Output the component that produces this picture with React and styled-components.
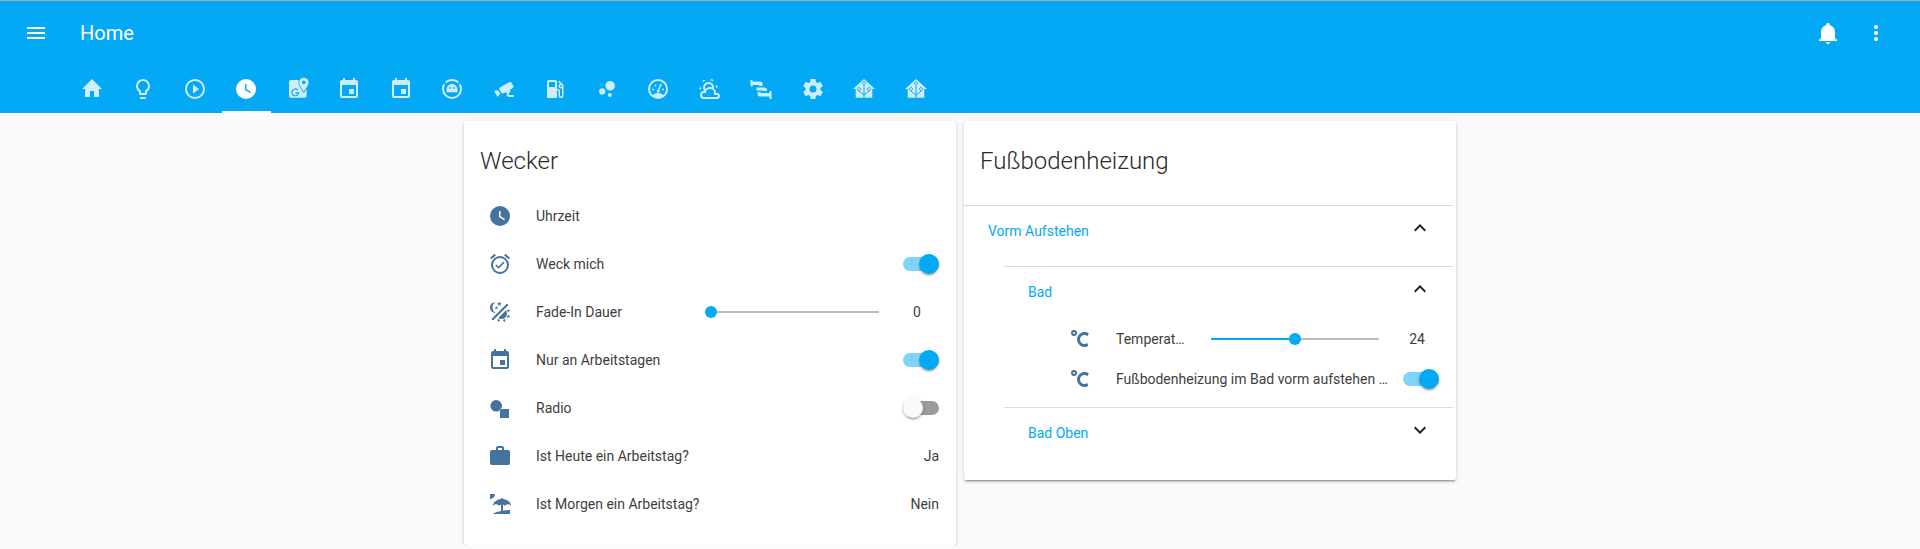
import React from "react";
import styled, { createGlobalStyle } from "styled-components";

const PATHS = {
  menu: "M3,6H21V8H3V6M3,11H21V13H3V11M3,16H21V18H3V16Z",
  bell: "M21,19V20H3V19L5,17V11C5,7.9 7.03,5.17 10,4.29C10,4.19 10,4.1 10,4A2,2 0 0,1 12,2A2,2 0 0,1 14,4C14,4.1 14,4.19 14,4.29C16.97,5.17 19,7.9 19,11V17L21,19M14,21A2,2 0 0,1 12,23A2,2 0 0,1 10,21",
  dots: "M12,16A2,2 0 0,1 14,18A2,2 0 0,1 12,20A2,2 0 0,1 10,18A2,2 0 0,1 12,16M12,10A2,2 0 0,1 14,12A2,2 0 0,1 12,14A2,2 0 0,1 10,12A2,2 0 0,1 12,10M12,4A2,2 0 0,1 14,6A2,2 0 0,1 12,8A2,2 0 0,1 10,6A2,2 0 0,1 12,4Z",
  home: "M10,20V14H14V20H19V12H22L12,2L2,12H5V20H10Z",
  bulb: "M12,2A7,7 0 0,1 19,9C19,11.38 17.81,13.47 16,14.74V17A1,1 0 0,1 15,18H9A1,1 0 0,1 8,17V14.74C6.19,13.47 5,11.38 5,9A7,7 0 0,1 12,2M9,21V20H15V21A1,1 0 0,1 14,22H10A1,1 0 0,1 9,21M12,4A5,5 0 0,0 7,9C7,11.05 8.23,12.81 10,13.58V16H14V13.58C15.77,12.81 17,11.05 17,9A5,5 0 0,0 12,4Z",
  play: "M10,16.5L16,12L10,7.5V16.5M12,2A10,10 0 0,0 2,12A10,10 0 0,0 12,22A10,10 0 0,0 22,12A10,10 0 0,0 12,2M12,20C7.59,20 4,16.41 4,12C4,7.59 7.59,4 12,4C16.41,4 20,7.59 20,12C20,16.41 16.41,20 12,20Z",
  clock: "M12,2A10,10 0 0,0 2,12A10,10 0 0,0 12,22A10,10 0 0,0 22,12A10,10 0 0,0 12,2M16.2,16.2L11,13V7H12.5V12.2L17,14.9L16.2,16.2Z",
  calendar: "M17 12h-5v5h5v-5zM16 1v2H8V1H6v2H5c-1.11 0-1.99.9-1.99 2L3 19c0 1.1.89 2 2 2h14c1.1 0 2-.9 2-2V5c0-1.1-.9-2-2-2h-1V1h-2zm3 18H5V8h14v11z",
  cctv: "M18.15,4.94C17.77,4.91 17.37,5 17,5.2L8.35,10.2C7.39,10.76 7.07,12 7.62,12.94L9.12,15.53C9.67,16.5 10.89,16.82 11.85,16.27L13.65,15.23C13.92,15.69 14.32,16.06 14.81,16.27V18.04C14.81,19.13 15.7,20 16.81,20H22V18.04H16.81V16.27C17.72,15.87 18.31,14.97 18.31,14C18.31,13.54 18.19,13.11 17.97,12.73L20.5,11.27C21.47,10.71 21.8,9.5 21.24,8.53L19.74,5.94C19.4,5.34 18.79,5 18.15,4.94M6.22,13.17L2,13.87L2.75,15.17L4.75,18.63L5.5,19.93L8.22,16.63L6.22,13.17Z",
  fuel: "M18,10A1,1 0 0,1 17,9A1,1 0 0,1 18,8A1,1 0 0,1 19,9A1,1 0 0,1 18,10M12,10H6V5H12M19.77,7.23L19.78,7.22L16.06,3.5L15,4.56L17.11,6.67C16.17,7 15.5,7.93 15.5,9A2.5,2.5 0 0,0 18,11.5C18.36,11.5 18.69,11.42 19,11.29V18.5A1,1 0 0,1 18,19.5A1,1 0 0,1 17,18.5V14C17,12.89 16.1,12 15,12H14V5C14,3.89 13.1,3 12,3H6C4.89,3 4,3.89 4,5V21H14V13.5H15.5V18.5A2.5,2.5 0 0,0 18,21A2.5,2.5 0 0,0 20.5,18.5V9C20.5,8.31 20.22,7.68 19.77,7.23Z",
  bubbles: "M7.2,11.2C8.97,11.2 10.4,12.63 10.4,14.4C10.4,16.17 8.97,17.6 7.2,17.6C5.43,17.6 4,16.17 4,14.4C4,12.63 5.43,11.2 7.2,11.2M14.8,16A2,2 0 0,1 16.8,18A2,2 0 0,1 14.8,20A2,2 0 0,1 12.8,18A2,2 0 0,1 14.8,16M15.2,4A4.8,4.8 0 0,1 20,8.8C20,11.45 17.85,13.6 15.2,13.6A4.8,4.8 0 0,1 10.4,8.8C10.4,6.15 12.55,4 15.2,4Z",
  weather: "M12.74,5.47C15.1,6.5 16.35,9.03 15.92,11.46C17.19,12.56 18,14.19 18,16V16.17C18.31,16.06 18.65,16 19,16A3,3 0 0,1 22,19A3,3 0 0,1 19,22H6A4,4 0 0,1 2,18A4,4 0 0,1 6,14H6.27C5,12.45 4.6,10.24 5.5,8.26C6.72,5.5 9.97,4.24 12.74,5.47M11.93,7.3C10.16,6.5 8.09,7.31 7.31,9.07C6.85,10.09 6.93,11.22 7.41,12.13C8.5,10.83 10.16,10 12,10C12.7,10 13.38,10.12 14,10.34C13.94,9.06 13.18,7.86 11.93,7.3M13.55,3.64C13,3.4 12.45,3.23 11.89,3.12L14.37,1.82L15.27,4.71C14.76,4.29 14.19,3.93 13.55,3.64M6.09,4.44C5.6,4.79 5.17,5.19 4.8,5.63L4.91,2.82L7.87,3.5C7.25,3.71 6.65,4.03 6.09,4.44M18,9.71C17.91,9.12 17.78,8.55 17.59,8L19.97,9.5L17.92,11.73C18.03,11.08 18.05,10.4 18,9.71M3.04,11.3C3.11,11.9 3.24,12.47 3.43,13L1.06,11.5L3.1,9.28C3,9.93 2.97,10.61 3.04,11.3M19,18H16V16A4,4 0 0,0 12,12A4,4 0 0,0 8,16H6A2,2 0 0,0 4,18A2,2 0 0,0 6,20H19A1,1 0 0,0 20,19A1,1 0 0,0 19,18Z",
  cog: "M12,15.5A3.5,3.5 0 0,1 8.5,12A3.5,3.5 0 0,1 12,8.5A3.5,3.5 0 0,1 15.5,12A3.5,3.5 0 0,1 12,15.5M19.43,12.97C19.47,12.65 19.5,12.33 19.5,12C19.5,11.67 19.47,11.34 19.43,11L21.54,9.37C21.73,9.22 21.78,8.95 21.66,8.73L19.66,5.27C19.54,5.05 19.27,4.96 19.05,5.05L16.56,6.05C16.04,5.66 15.5,5.32 14.87,5.07L14.5,2.42C14.46,2.18 14.25,2 14,2H10C9.75,2 9.54,2.18 9.5,2.42L9.13,5.07C8.5,5.32 7.96,5.66 7.44,6.05L4.95,5.05C4.73,4.96 4.46,5.05 4.34,5.27L2.34,8.73C2.21,8.95 2.27,9.22 2.46,9.37L4.57,11C4.53,11.34 4.5,11.67 4.5,12C4.5,12.33 4.53,12.65 4.57,12.97L2.46,14.63C2.27,14.78 2.21,15.05 2.34,15.27L4.34,18.73C4.46,18.95 4.73,19.03 4.95,18.95L7.44,17.94C7.96,18.34 8.5,18.68 9.13,18.93L9.5,21.58C9.54,21.82 9.75,22 10,22H14C14.25,22 14.46,21.82 14.5,21.58L14.87,18.93C15.5,18.67 16.04,18.34 16.56,17.94L19.05,18.95C19.27,19.03 19.54,18.95 19.66,18.73L21.66,15.27C21.78,15.05 21.73,14.78 21.54,14.63L19.43,12.97Z",
  alarm: "M10.54,14.53L8.41,12.4L7.35,13.46L10.53,16.64L16.53,10.64L15.47,9.58L10.54,14.53M12,20A7,7 0 0,1 5,13A7,7 0 0,1 12,6A7,7 0 0,1 19,13A7,7 0 0,1 12,20M12,4A9,9 0 0,0 3,13A9,9 0 0,0 12,22A9,9 0 0,0 21,13A9,9 0 0,0 12,4M7.88,3.39L6.6,1.86L2,5.71L3.29,7.24L7.88,3.39M22,5.72L17.4,1.86L16.11,3.39L20.71,7.25L22,5.72Z",
  fade: "M7.5,2C5.71,3.15 4.5,5.18 4.5,7.5C4.5,9.82 5.71,11.85 7.53,13C4.46,13 2,10.54 2,7.5A5.5,5.5 0 0,1 7.5,2M19.07,3.5L20.5,4.93L4.93,20.5L3.5,19.07L19.07,3.5M12.89,5.93L11.41,5L9.97,6L10.39,4.3L9,3.24L10.75,3.12L11.33,1.47L12,3.1L13.73,3.13L12.38,4.26L12.89,5.93M9.59,9.54L8.43,8.81L7.31,9.59L7.65,8.27L6.56,7.44L7.92,7.35L8.37,6.06L8.88,7.33L10.24,7.36L9.19,8.23L9.59,9.54M19,13.5A5.5,5.5 0 0,1 13.5,19C12.28,19 11.15,18.6 10.24,17.93L17.93,10.24C18.6,11.15 19,12.28 19,13.5M14.6,20.08L17.37,18.93L17.13,22.28L14.6,20.08M18.93,17.38L20.08,14.61L22.28,17.15L18.93,17.38M20.08,12.42L18.94,9.64L22.28,9.88L20.08,12.42M9.63,18.93L12.4,20.08L9.87,22.27L9.63,18.93Z",
  radio: "M8.2,4A5.8,5.8 0 1,1 8.2,15.6A5.8,5.8 0 1,1 8.2,4ZM12,13H21V22H12Z",
  briefcase: "M10,2H14A2,2 0 0,1 16,4V6H20A2,2 0 0,1 22,8V19A2,2 0 0,1 20,21H4C2.89,21 2,20.1 2,19V8C2,6.89 2.89,6 4,6H8V4C8,2.89 8.89,2 10,2M14,6V4H10V6H14Z",
  beach: "M15,18.54C17.13,18.21 19.5,18 22,18V22H5C5,21.35 8.2,19.86 13,18.9V12.4C12.16,12.65 11.45,13.21 11,13.95C10.39,12.93 9.27,12.25 8,12.25C6.73,12.25 5.61,12.93 5,13.95C5.03,10.37 8.5,7.43 13,7.04V7A1,1 0 0,1 14,6A1,1 0 0,1 15,7V7.04C19.5,7.43 22.96,10.37 23,13.95C22.39,12.93 21.27,12.25 20,12.25C18.73,12.25 17.61,12.93 17,13.95C16.55,13.21 15.84,12.65 15,12.39V18.54M7,2A5,5 0 0,1 2,7V2H7Z",
  celsius: "M16.5,5C18.05,5 19.5,5.47 20.69,6.28L19.53,9.17C18.73,8.44 17.67,8 16.5,8C14,8 12,10 12,12.5C12,15 14,17 16.5,17C17.53,17 18.47,16.66 19.23,16.08L20.37,18.93C19.24,19.61 17.92,20 16.5,20A7.5,7.5 0 0,1 9,12.5A7.5,7.5 0 0,1 16.5,5M6,3A3,3 0 0,1 9,6A3,3 0 0,1 6,9A3,3 0 0,1 3,6A3,3 0 0,1 6,3M6,5A1,1 0 0,0 5,6A1,1 0 0,0 6,7A1,1 0 0,0 7,6A1,1 0 0,0 6,5Z",
  chevronUp: "M7.41,15.41L12,10.83L16.59,15.41L18,14L12,8L6,14L7.41,15.41Z",
  chevronDown: "M7.41,8.58L12,13.17L16.59,8.58L18,10L12,16L6,10L7.41,8.58Z",
  // drawn by hand, no stock icon
  maps: "M5,3H12.8C12.4,3.9 12.3,4.6 12.3,5.3C12.3,9 17.8,16 17.8,16L20.7,12.2V19A1.7,1.7 0 0,1 19,20.7H5A2,2 0 0,1 3,19V5A2,2 0 0,1 5,3ZM12.1,12.5A4,4 0 1,0 13.3,15.3H9.5V16.5H11.8A2.7,2.7 0 1,1 11.2,13.4ZM17.8,0.7A4.7,4.7 0 0,1 22.5,5.4C22.5,8.8 17.8,14.5 17.8,14.5C17.8,14.5 13.1,8.8 13.1,5.4A4.7,4.7 0 0,1 17.8,0.7ZM17.8,3.6A1.8,1.8 0 1,0 17.8,7.2A1.8,1.8 0 1,0 17.8,3.6Z",
  robot: "M12,2C14.65,2 17.19,3.06 19.07,4.93L17.65,6.35C16.15,4.85 14.12,4 12,4C9.88,4 7.84,4.84 6.35,6.35L4.93,4.93C6.81,3.06 9.35,2 12,2M3.66,6.5L5.11,7.94C4.39,9.17 4,10.57 4,12A8,8 0 0,0 12,20A8,8 0 0,0 20,12C20,10.57 19.61,9.17 18.88,7.94L20.34,6.5C21.42,8.12 22,10.04 22,12A10,10 0 0,1 12,22A10,10 0 0,1 2,12C2,10.04 2.58,8.12 3.66,6.5M12,7C8.8,7 6.6,9.5 6.6,12.5V15.2H17.4V12.5C17.4,9.5 15.2,7 12,7M10,10A.9,.9 0 0,1 10.9,10.9A.9,.9 0 0,1 10,11.8A.9,.9 0 0,1 9.1,10.9A.9,.9 0 0,1 10,10M14,10A.9,.9 0 0,1 14.9,10.9A.9,.9 0 0,1 14,11.8A.9,.9 0 0,1 13.1,10.9A.9,.9 0 0,1 14,10Z",
  gauge: "M12,2A10,10 0 0,1 22,12A10,10 0 0,1 12,22A10,10 0 0,1 2,12A10,10 0 0,1 12,2M12,4A8,8 0 0,0 4,12C4,14.4 5,16.5 6.7,18C8.2,16.7 10,16 12,16C14,16 15.9,16.7 17.3,18C19,16.5 20,14.4 20,12A8,8 0 0,0 12,4M7,11.5A1,1 0 0,1 8,12.5A1,1 0 0,1 7,13.5A1,1 0 0,1 6,12.5A1,1 0 0,1 7,11.5M9.5,7.5A1,1 0 0,1 10.5,8.5A1,1 0 0,1 9.5,9.5A1,1 0 0,1 8.5,8.5A1,1 0 0,1 9.5,7.5M17,11.5A1,1 0 0,1 18,12.5A1,1 0 0,1 17,13.5A1,1 0 0,1 16,12.5A1,1 0 0,1 17,11.5M14.5,6.5L15.9,7.1L13.4,13.2A1.5,1.5 0 1,1 12,12.6Z",
  pipe: "M1.5,3H3.5V9.5H1.5ZM3.5,4.5H11A2.5,2.5 0 0,1 13.5,7V9H10V8H3.5ZM7.5,10.5H15.5A2.5,2.5 0 0,1 18,13V14H14.5V13.5H7.5ZM8.5,15H11.5V16H20.5V14H22.5V22H20.5V19.5H11A2.5,2.5 0 0,1 8.5,17Z",
  assistant: "M12,2L23,12H20.3V20.7H3.7V12H1Z",
};

// lines of the circuit on the home-assistant logo, in the colour of the bar
const assistantCircuit =
  "M12,8.4V21M7,14.2L11.8,18M17,14.2L12.2,18M12,4.6a1.5,1.5 0 1,0 .01,0M7,10.6a1.5,1.5 0 1,0 .01,0M17,10.6a1.5,1.5 0 1,0 .01,0";

const Page = createGlobalStyle`
  body {
    margin: 0;
    background: #fafafa;
    font-family: Roboto, "Liberation Sans", sans-serif;
  }
`;

const Header = styled.header`
  height: 113px;
  background: #03a9f4;
  border-top: 1px solid #a9adb0;
  box-sizing: border-box;
  color: #fff;
`;

const Toolbar = styled.div`
  display: flex;
  align-items: center;
  height: 64px;
  padding: 0 16px;
`;

const Title = styled.div`
  flex: 1;
  margin-left: 24px;
  font-size: 20px;
  font-weight: 400;
`;

const IconBox = styled.span`
  display: flex;
  flex: none;
  align-items: center;
  justify-content: center;
  width: ${(props) => props.$box || 40}px;
  height: 40px;
  color: ${(props) => props.$color || "inherit"};
`;

const Tabs = styled.nav`
  display: flex;
  gap: 3px;
  height: 48px;
  padding-left: 67.5px;
`;

const Tab = styled.div`
  display: flex;
  align-items: center;
  justify-content: center;
  width: 48.5px;
  box-sizing: border-box;
  border-bottom: 2px solid ${(props) => (props.$active ? "#fff" : "transparent")};
  padding-top: 2px;
  color: ${(props) => (props.$active ? "#fff" : "rgba(255, 255, 255, 0.8)")};
`;

const Content = styled.main`
  display: flex;
  justify-content: center;
  align-items: flex-start;
  gap: 8px;
  padding-top: 8px;
`;

const Card = styled.section`
  width: 492px;
  background: #fff;
  border-radius: 2px;
  box-shadow: 0 2px 2px rgba(0, 0, 0, 0.14), 0 1px 5px rgba(0, 0, 0, 0.12),
    0 3px 1px -2px rgba(0, 0, 0, 0.2);
  color: #212121;
`;

const CardTitle = styled.h2`
  margin: 0;
  height: ${(props) => props.$height}px;
  padding: 24px 16px 0;
  box-sizing: border-box;
  font-size: 24px;
  font-weight: 300;
  line-height: 32px;
  color: #2a2a2a;
`;

const Rows = styled.div`
  padding: 0 17px 17px 16px;
`;

const Row = styled.div`
  display: flex;
  align-items: center;
  height: ${(props) => props.$height || 48}px;
  font-size: 14px;
  color: #3e3e3e;
`;

const Label = styled.span`
  flex: 1;
  min-width: 0;
  margin: 0 ${(props) => props.$gap || 0}px 0 16px;
  white-space: nowrap;
  overflow: hidden;
  text-overflow: ellipsis;
`;

const Value = styled.span`
  color: #3e3e3e;
`;

const SliderTrack = styled.div`
  position: relative;
  flex: none;
  width: 168px;
  height: 2px;
  margin-right: 16px;
  background: #bdbdbd;
`;

const SliderFill = styled.div`
  height: 2px;
  background: #03a9f4;
`;

const SliderThumb = styled.div`
  position: absolute;
  top: -5px;
  width: 12px;
  height: 12px;
  margin-left: -6px;
  border-radius: 50%;
  background: #03a9f4;
`;

const SliderValue = styled.span`
  flex: none;
  width: 44px;
  text-align: center;
`;

const SwitchTrack = styled.div`
  position: relative;
  flex: none;
  width: 36px;
  height: 14px;
  border-radius: 7px;
  background: ${(props) => (props.$on ? "rgba(3, 169, 244, 0.5)" : "#9b9b9b")};
`;

const SwitchThumb = styled.div`
  position: absolute;
  top: -3px;
  left: ${(props) => (props.$on ? "16px" : "0")};
  width: 20px;
  height: 20px;
  border-radius: 50%;
  background: ${(props) => (props.$on ? "#03a9f4" : "#fafafa")};
  box-shadow: 0 2px 2px rgba(0, 0, 0, 0.14), 0 1px 5px rgba(0, 0, 0, 0.12),
    0 3px 1px -2px rgba(0, 0, 0, 0.2);
`;

const Panel = styled.div`
  margin: 0 3px 0 ${(props) => props.$indent || 0}px;
  border-top: 1px solid #dcdcdc;
  padding-bottom: ${(props) => props.$bottom || 0}px;
`;

const NestedPanel = styled(Panel)`
  margin-right: 0;
`;

const PanelHead = styled.div`
  display: flex;
  justify-content: space-between;
  align-items: flex-start;
  height: ${(props) => props.$height || 50}px;
  padding: 0 21px 0 24px;
  font-size: 14px;
  line-height: 50px;
  color: #03a9f4;
`;

const Chevron = styled.span`
  display: flex;
  align-items: center;
  height: 44px;
  color: #212121;
`;

const PanelRows = styled.div`
  padding: 0 14px 8px 56px;
`;

const Icon = ({ name, size = 24 }) => (
  <svg width={size} height={size} viewBox="0 0 24 24" fill="currentColor" fillRule="evenodd">
    <path d={PATHS[name]} />
    {name === "assistant" && (
      <path d={assistantCircuit} fill="none" stroke="#03a9f4" strokeWidth="1" />
    )}
  </svg>
);

const Slider = ({ percent, value }) => (
  <>
    <SliderTrack>
      <SliderFill style={{ width: `${percent}%` }} />
      <SliderThumb style={{ left: `${percent}%` }} />
    </SliderTrack>
    <SliderValue>{value}</SliderValue>
  </>
);

const Switch = ({ on }) => (
  <SwitchTrack $on={on}>
    <SwitchThumb $on={on} />
  </SwitchTrack>
);

const StateIcon = ({ name }) => (
  <IconBox $color="#44739e">
    <Icon name={name} />
  </IconBox>
);

const tabs = [
  "home", "bulb", "play", "clock", "maps", "calendar", "calendar", "robot", "cctv",
  "fuel", "bubbles", "gauge", "weather", "pipe", "cog", "assistant", "assistant",
];

const App = () => {
  return (
    <>
      <Page />
      <Header>
        <Toolbar>
          <IconBox><Icon name="menu" /></IconBox>
          <Title>Home</Title>
          <IconBox><Icon name="bell" /></IconBox>
          <IconBox $box={56}><Icon name="dots" /></IconBox>
        </Toolbar>
        <Tabs>
          {tabs.map((name, i) => (
            <Tab key={i} $active={name === "clock"}>
              <Icon name={name} />
            </Tab>
          ))}
        </Tabs>
      </Header>
      <Content>
        <Card>
          <CardTitle $height={71}>Wecker</CardTitle>
          <Rows>
            <Row>
              <StateIcon name="clock" />
              <Label>Uhrzeit</Label>
            </Row>
            <Row>
              <StateIcon name="alarm" />
              <Label>Weck mich</Label>
              <Switch on />
            </Row>
            <Row>
              <StateIcon name="fade" />
              <Label>Fade-In Dauer</Label>
              <Slider percent={0} value="0" />
            </Row>
            <Row>
              <StateIcon name="calendar" />
              <Label>Nur an Arbeitstagen</Label>
              <Switch on />
            </Row>
            <Row>
              <StateIcon name="radio" />
              <Label>Radio</Label>
              <Switch />
            </Row>
            <Row>
              <StateIcon name="briefcase" />
              <Label>Ist Heute ein Arbeitstag?</Label>
              <Value>Ja</Value>
            </Row>
            <Row>
              <StateIcon name="beach" />
              <Label>Ist Morgen ein Arbeitstag?</Label>
              <Value>Nein</Value>
            </Row>
          </Rows>
        </Card>
        <Card>
          <CardTitle $height={84}>Fußbodenheizung</CardTitle>
          <Panel>
            <PanelHead $height={60}>
              Vorm Aufstehen
              <Chevron><Icon name="chevronUp" /></Chevron>
            </PanelHead>
            <NestedPanel $indent={40}>
              <PanelHead $height={52}>
                Bad
                <Chevron><Icon name="chevronUp" /></Chevron>
              </PanelHead>
              <PanelRows>
                <Row $height={40}>
                  <StateIcon name="celsius" />
                  <Label $gap={25}>Temperatur</Label>
                  <Slider percent={50} value="24" />
                </Row>
                <Row $height={40}>
                  <StateIcon name="celsius" />
                  <Label $gap={13}>Fußbodenheizung im Bad vorm aufstehen einschalten</Label>
                  <Switch on />
                </Row>
              </PanelRows>
            </NestedPanel>
            <NestedPanel $indent={40} $bottom={20}>
              <PanelHead $height={52}>
                Bad Oben
                <Chevron><Icon name="chevronDown" /></Chevron>
              </PanelHead>
            </NestedPanel>
          </Panel>
        </Card>
      </Content>
    </>
  );
};

export default App;
